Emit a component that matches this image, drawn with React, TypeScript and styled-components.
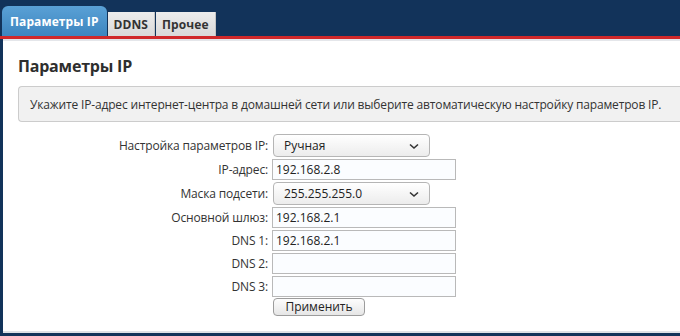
import React from "react";
import styled, { createGlobalStyle } from "styled-components";

const Global = createGlobalStyle`
  html, body { margin: 0; padding: 0; }
  body {
    width: 680px;
    height: 336px;
    overflow: hidden;
    background: #12335a;
    font-family: "Open Sans", "DejaVu Sans", sans-serif;
  }
`;

const Page = styled.div`
  width: 680px;
  height: 336px;
  display: flex;
  flex-direction: column;
  background: #12335a;
`;

const TabBar = styled.div`
  display: flex;
  align-items: flex-end;
  height: 36px;
  padding-left: 2px;
  gap: 1px;
`;

const Tab = styled.div<{ $active?: boolean }>`
  height: ${(p) => (p.$active ? 30 : 24)}px;
  padding: 0 ${(p) => (p.$active ? 8 : 6)}px;
  display: flex;
  align-items: center;
  font-size: 12px;
  font-weight: 700;
  letter-spacing: 0.1px;
  color: ${(p) => (p.$active ? "#ffffff" : "#333333")};
  background: ${(p) =>
    p.$active
      ? "linear-gradient(#5aa1d6, #3d85bf)"
      : "linear-gradient(#ececec, #d9d9d9)"};
  border-radius: ${(p) => (p.$active ? "6px 6px 0 0" : "0")};
  border-right: ${(p) => (p.$active ? "none" : "1px solid #c4c4c4")};
`;

const RedBar = styled.div`
  height: 3px;
  background: #d0282a;
`;

const Panel = styled.div`
  flex: 1;
  margin-left: 3px;
  margin-bottom: 3px;
  background: #ffffff;
  border-top: 2px solid #e4e6ea;
  border-bottom: 2px solid #dde1e6;
  padding: 14px 0 0 15px;
  display: flex;
  flex-direction: column;
`;

const Title = styled.h1`
  margin: 0;
  font-size: 16px;
  font-weight: 700;
  letter-spacing: -0.2px;
  color: #2e2e2e;
  line-height: 22px;
`;

const Info = styled.div`
  margin-top: 9px;
  height: 34px;
  border: 1px solid #cccccc;
  border-right: none;
  border-radius: 4px 0 0 4px;
  background: #f1f1f1;
  display: flex;
  align-items: center;
  padding-left: 11px;
  font-size: 12px;
  letter-spacing: -0.16px;
  color: #333333;
  white-space: nowrap;
`;

const Form = styled.div`
  margin-top: 12px;
  display: grid;
  grid-template-columns: 250px auto;
  column-gap: 4px;
  row-gap: 2px;
  justify-content: start;
  align-items: center;
`;

const Label = styled.label`
  text-align: right;
  font-size: 12px;
  line-height: 16px;
  letter-spacing: -0.15px;
  color: #333333;
  white-space: nowrap;
`;

const SelectBox = styled.div`
  position: relative;
  width: 157px;
  height: 23px;
  margin-left: 1px;
  box-sizing: border-box;
  border: 1px solid #b5b5b5;
  border-radius: 4px;
  background: linear-gradient(#ffffff, #ececec);
  display: flex;
  align-items: center;
  padding-left: 10px;
  font-size: 12px;
  color: #222222;
`;

const Chevron = styled.svg`
  position: absolute;
  right: 10px;
  top: 8px;
`;

const Input = styled.input`
  width: 184px;
  height: 21px;
  box-sizing: border-box;
  border: 1px solid #b9b9b9;
  background: #fbfdff;
  padding: 0 3px;
  margin: 0;
  font-family: inherit;
  font-size: 12px;
  color: #222222;
  outline: none;
`;

const Button = styled.button`
  width: 92px;
  height: 18px;
  margin: -1px 0 0 1px;
  border: 1px solid #9c9c9c;
  border-radius: 4px;
  background: linear-gradient(#fdfdfd, #e6e6e6);
  font-family: inherit;
  font-size: 12px;
  color: #222222;
  padding: 0;
  line-height: 16px;
`;

const Select = ({ value }: { value: string }) => (
  <SelectBox>
    {value}
    <Chevron width="10" height="7" viewBox="0 0 10 7">
      <path d="M1 1.5 L5 5 L9 1.5" fill="none" stroke="#333" strokeWidth="1.6" />
    </Chevron>
  </SelectBox>
);

export default function App() {
  return (
    <Page>
      <Global />
      <TabBar>
        <Tab $active>Параметры IP</Tab>
        <Tab>DDNS</Tab>
        <Tab>Прочее</Tab>
      </TabBar>
      <RedBar />
      <Panel>
        <Title>Параметры IP</Title>
        <Info>
          Укажите IP-адрес интернет-центра в домашней сети или выберите автоматическую настройку параметров IP.
        </Info>
        <Form>
          <Label>Настройка параметров IP:</Label>
          <Select value="Ручная" />
          <Label>IP-адрес:</Label>
          <Input defaultValue="192.168.2.8" />
          <Label>Маска подсети:</Label>
          <Select value="255.255.255.0" />
          <Label>Основной шлюз:</Label>
          <Input defaultValue="192.168.2.1" />
          <Label>DNS 1:</Label>
          <Input defaultValue="192.168.2.1" />
          <Label>DNS 2:</Label>
          <Input defaultValue="" />
          <Label>DNS 3:</Label>
          <Input defaultValue="" />
          <span />
          <Button>Применить</Button>
        </Form>
      </Panel>
    </Page>
  );
}
